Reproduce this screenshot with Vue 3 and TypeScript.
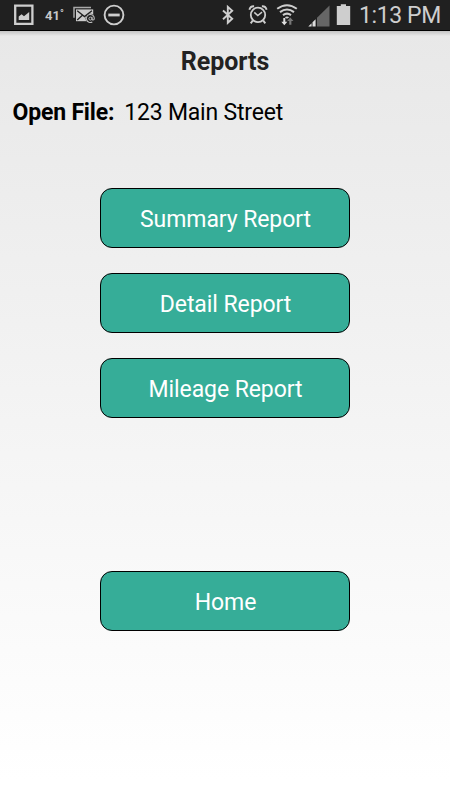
<script setup lang="ts">
interface ReportButton {
  id: string
  label: string
}

const openFile = '123 Main Street'

const reports: ReportButton[] = [
  { id: 'summary', label: 'Summary Report' },
  { id: 'detail', label: 'Detail Report' },
  { id: 'mileage', label: 'Mileage Report' },
]
</script>

<template>
  <div class="screen">
    <header class="status">
      <div class="status-left">
        <svg class="icon" width="20" height="30" viewBox="0 0 20 30">
          <path d="M1.2 5.7h17.2v18.2H1.2z" fill="none" stroke="#cecece" stroke-width="2.3" />
          <path d="M4.7 20v-3.4l2.9-2.3 2.4 2 5.2-4.3v8z" fill="#cecece" />
        </svg>
        <span class="temp">41<span class="degree">°</span></span>
        <svg class="icon mail" width="23" height="30" viewBox="0 0 23 30">
          <path d="M1 17.8V7.5h17" fill="none" stroke="#a8a8a8" stroke-width="1.5" />
          <path d="M3 9.4h17.2v11.8H3z" fill="#cacaca" />
          <path d="M4.2 10.8l7.3 5.8 7.4-5.8M4.2 20l5.2-4.8M13.5 15.2l2 1.8" fill="none" stroke="#202020" stroke-width="1.3" />
          <circle cx="17.3" cy="18.5" r="4.7" fill="#202020" />
          <path d="M19.3 21.9a4 4 0 1 1 2-3.4c0 1.9-2.4 2-2.3.3v-2" fill="none" stroke="#bdbdbd" stroke-width="1.1" />
          <circle cx="17.4" cy="18.6" r="1.5" fill="none" stroke="#bdbdbd" stroke-width="1" />
        </svg>
        <svg class="icon block" width="22" height="30" viewBox="0 0 22 30">
          <circle cx="11" cy="15" r="9.4" fill="none" stroke="#cecece" stroke-width="1.9" />
          <path d="M5.3 15h11.4" stroke="#cecece" stroke-width="2.8" />
        </svg>
      </div>
      <div class="status-right">
        <svg class="icon bluetooth" width="14" height="30" viewBox="0 0 14 30">
          <path d="M2 10.5l9.2 8.3-4.4 4V6.8l4.4 4L2 19.2" fill="none" stroke="#cecece" stroke-width="1.9" />
        </svg>
        <svg class="icon alarm" width="20" height="30" viewBox="0 0 20 30">
          <circle cx="10" cy="14.9" r="7.2" fill="none" stroke="#cecece" stroke-width="1.8" />
          <path d="M6.3 12.4l3.5 3.1 4.2-3.3" fill="none" stroke="#cecece" stroke-width="1.5" />
          <path d="M1.4 9.8A4.5 4.5 0 0 1 6.1 6.3M18.6 9.8a4.5 4.5 0 0 0-4.7-3.5M4.7 20.7l-2 2.6M15.3 20.7l2 2.6" fill="none" stroke="#cecece" stroke-width="1.9" />
        </svg>
        <svg class="icon wifi" width="22" height="30" viewBox="0 0 22 30">
          <path d="M1.2 8.8q9.8-7.2 19.6 0M4 12.1q7-5.2 14 0M7 15.1q4-3 8 0" fill="none" stroke="#cecece" stroke-width="2" />
          <path d="M8.7 17.3q2.3-1.6 4.6 0L11 18.8z" fill="#cecece" />
          <path d="M7.3 18h2v3.7h2L8.3 25.3l-3-3.6h2z" fill="#e0e0e0" />
          <path d="M13.2 24.7v-3.6h-2.1l3.2-3.7 3.2 3.7h-2.1v3.6z" fill="#777" />
        </svg>
        <svg class="icon signal" width="22" height="30" viewBox="0 0 22 30">
          <path d="M9 17.8L21.5 5.5v21H9z" fill="#666" />
          <path d="M.3 26.5L3.6 23.2v3.3zM4.5 22.3l3.1-3v7.2H4.5z" fill="#dedede" />
        </svg>
        <svg class="icon battery" width="15" height="30" viewBox="0 0 15 30">
          <path d="M4.8 4.2h5.2v1.7h4.2v19H.8v-19h4z" fill="#cecece" />
        </svg>
        <span class="clock">1:13 PM</span>
      </div>
    </header>

    <main class="content">
      <h1 class="title">Reports</h1>
      <p class="file"><strong class="file-label">Open File:</strong><span class="file-name">{{ openFile }}</span></p>
      <nav class="actions">
        <button v-for="report in reports" :key="report.id" class="action" type="button">{{ report.label }}</button>
      </nav>
      <button class="action home" type="button">Home</button>
    </main>
  </div>
</template>

<style>
body {
  margin: 0;
}
</style>

<style scoped>
.screen {
  width: 450px;
  height: 800px;
  overflow: hidden;
  font-family: Roboto, sans-serif;
  background: linear-gradient(#e8e8e8 31px, #fff 780px);
}

.status {
  box-sizing: border-box;
  display: flex;
  justify-content: space-between;
  height: 31px;
  padding: 0 9px 0 14px;
  background: #202020;
  border-bottom: 1px solid #000;
}

.status-left,
.status-right {
  display: flex;
  align-items: center;
}

.icon {
  display: block;
  flex: none;
}

.temp {
  display: flex;
  width: 28px;
  margin-left: 11px;
  color: #c8c8c8;
  font-size: 13px;
  font-weight: 700;
  line-height: 31px;
}

.degree {
  font-size: 10px;
  line-height: 28px;
}

.block {
  margin-left: 7px;
}

.alarm {
  margin-left: 13px;
}

.wifi {
  margin-left: 8px;
}

.signal {
  margin-left: 10px;
}

.battery {
  margin-left: 6px;
}

.clock {
  width: 82px;
  margin-left: 8px;
  padding-top: 1px;
  color: #cecece;
  font-size: 23px;
  letter-spacing: -0.4px;
  line-height: 30px;
  white-space: nowrap;
}

.content {
  display: flex;
  flex-direction: column;
  align-items: center;
  padding-top: 14px;
  background: linear-gradient(rgba(0, 0, 0, 0.16), rgba(0, 0, 0, 0) 5px);
}

.title {
  margin: 0;
  color: #222;
  font-size: 25px;
  font-weight: 700;
  letter-spacing: -0.05px;
  line-height: 34px;
}

.file {
  display: flex;
  align-self: stretch;
  gap: 10px;
  margin: 17px 0 0;
  padding-left: 12.5px;
  color: #000;
  font-size: 23px;
  line-height: 34px;
}

.file-label {
  font-weight: 700;
  letter-spacing: -0.18px;
}

.file-name {
  letter-spacing: -0.2px;
}

.actions {
  display: flex;
  flex-direction: column;
  gap: 25px;
  margin-top: 58px;
}

.action {
  box-sizing: border-box;
  width: 250px;
  height: 60px;
  padding: 4px 0 0 1px;
  border: 1px solid #000;
  border-radius: 12px;
  background: #36ad98;
  color: #fff;
  font: 400 23px/32px Roboto, sans-serif;
  letter-spacing: -0.08px;
}

.home {
  margin-top: 153px;
}
</style>
